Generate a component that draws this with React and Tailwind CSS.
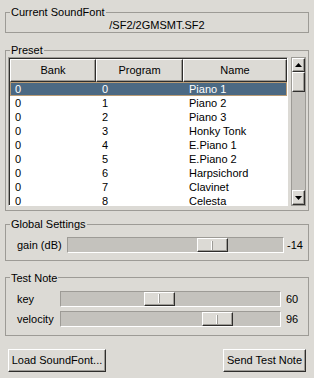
import clsx from 'clsx'

const presets = [
  ['0', '0', 'Piano 1'],
  ['0', '1', 'Piano 2'],
  ['0', '2', 'Piano 3'],
  ['0', '3', 'Honky Tonk'],
  ['0', '4', 'E.Piano 1'],
  ['0', '5', 'E.Piano 2'],
  ['0', '6', 'Harpsichord'],
  ['0', '7', 'Clavinet'],
  ['0', '8', 'Celesta'],
]

const Group = ({ title, className, children }) => (
  <fieldset className={clsx('min-w-0 border border-[#9d9b96]', className)}>
    <legend className="ml-[4px] px-[1px] leading-[12px]">{title}</legend>
    {children}
  </fieldset>
)

const raised = 'bg-[#dcdad5] border border-t-white border-l-white border-r-[#2f2e2c] border-b-[#2f2e2c] shadow-[inset_-1px_-1px_0_#9d9b96]'

const Arrow = ({ down }) => (
  <svg width="7" height="4" viewBox="0 0 7 4" className="block">
    <polygon points={down ? '0,0 7,0 3.5,4' : '3.5,0 7,4 0,4'} fill="#000" />
  </svg>
)

const Slider = ({ width, offset }) => (
  <div className={clsx('flex h-[16px] bg-[#c4c2bd] border border-t-[#9d9b96] border-l-[#9d9b96] border-r-white border-b-white', width)}>
    <div className={clsx('flex h-[14px] w-[31px] items-center justify-center', raised, offset)}>
      <div className="h-[9px] w-px bg-[#9d9b96] shadow-[-1px_0_0_#fff]" />
    </div>
  </div>
)

const App = () => {
  return (
    <div className="h-[378px] w-[314px] overflow-hidden bg-[#dcdad5] px-[5px] pt-[6px] font-['Liberation_Sans',Arial,sans-serif] text-[11px] text-black">
      <Group title="Current SoundFont">
        <div className="h-[14px] text-center leading-[14px]">/SF2/2GMSMT.SF2</div>
      </Group>

      <Group title="Preset" className="mt-[11px]">
        <div className="flex gap-[3px] px-[2px] pb-[4px] pt-px">
          <div className="h-[149px] w-[280px] border border-[#9d9b96] border-b-white border-r-white">
            <div className="h-full overflow-hidden border-l border-t border-[#2f2e2c] bg-white">
              <div className="flex h-[23px] leading-[21px]">
                <div className={clsx('w-[86px] text-center', raised)}>Bank</div>
                <div className={clsx('w-[87px] text-center', raised)}>Program</div>
                <div className={clsx('flex-1 text-center', raised)}>Name</div>
              </div>
              {presets.map(([bank, prog, name], i) => (
                <div
                  key={prog}
                  className={clsx(
                    'flex h-[14px] leading-[14px]',
                    i === 0 && 'bg-[#4b6983] text-white shadow-[inset_0_0_0_1px_#b99c76]'
                  )}
                >
                  <div className="w-[86px] pl-[5px]">{bank}</div>
                  <div className="w-[87px] pl-[6px]">{prog}</div>
                  <div className="flex-1 pl-[6px]">{name}</div>
                </div>
              ))}
            </div>
          </div>
          <div className="flex h-[149px] w-[15px] flex-col border border-[#9d9b96] bg-[#c4c2bd]">
            <div className={clsx('flex h-[14px] items-center justify-center', raised)}>
              <Arrow />
            </div>
            <div className={clsx('h-[20px]', raised)} />
            <div className="flex-1" />
            <div className={clsx('flex h-[15px] items-center justify-center', raised)}>
              <Arrow down />
            </div>
          </div>
        </div>
      </Group>

      <Group title="Global Settings" className="mt-[7px]">
        <div className="flex items-center pb-[6px] pl-[11px] pt-[7px]">
          <span className="w-[50px]">gain (dB)</span>
          <Slider width="w-[217px]" offset="ml-[129px]" />
          <span className="ml-[3px]">-14</span>
        </div>
      </Group>

      <Group title="Test Note" className="mt-[11px]">
        <div className="flex flex-col gap-[4px] pb-[7px] pl-[11px] pt-[7px]">
          <div className="flex items-center">
            <span className="w-[43px]">key</span>
            <Slider width="w-[221px]" offset="ml-[83px]" />
            <span className="ml-[5px]">60</span>
          </div>
          <div className="flex items-center">
            <span className="w-[43px]">velocity</span>
            <Slider width="w-[221px]" offset="ml-[141px]" />
            <span className="ml-[5px]">96</span>
          </div>
        </div>
      </Group>

      <div className="mt-[13px] flex justify-between px-[3px]">
        <button className={clsx('h-[23px] w-[98px] leading-[20px]', raised)}>Load SoundFont...</button>
        <button className={clsx('h-[23px] w-[83px] leading-[20px]', raised)}>Send Test Note</button>
      </div>
    </div>
  )
}

export default App
